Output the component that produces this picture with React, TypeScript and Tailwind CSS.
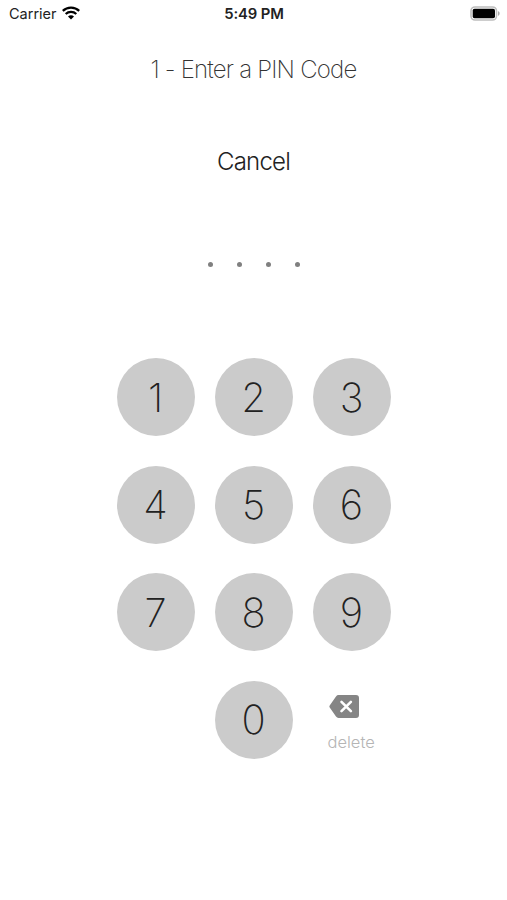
const keys = [1, 2, 3, 4, 5, 6, 7, 8, 9];

function PinKey({ value }: { value: number }) {
  return (
    <button className="flex h-[78px] w-[78px] items-center justify-center rounded-full bg-[#cbcbcb] pt-px text-[40px] leading-none font-extralight text-[#222]">
      {value}
    </button>
  );
}

function StatusBar() {
  return (
    <header className="grid h-7 grid-cols-3 items-center pr-[7px] pl-[9px] text-[14.5px] text-[#222]">
      <div className="flex items-center gap-[5px]">
        <span>Carrier</span>
        <svg className="-mt-0.5" width="18" height="14" viewBox="0 0 18 14" fill="none" stroke="#000" strokeWidth="2.2">
          <path d="M.8 4.9C5.3.5 12.7.5 17.2 4.9" />
          <path d="M3.7 8c2.9-2.8 7.7-2.8 10.6 0" />
          <path d="M6 10.4 9 13.5l3-3.1c-1.7-1.5-4.3-1.5-6 0Z" fill="#000" stroke="none" />
        </svg>
      </div>
      <span className="pr-px text-center text-[14.8px] font-semibold tracking-[-0.1px]">5:49 PM</span>
      <svg className="-mt-0.5 ml-auto" width="30" height="15" viewBox="0 0 30 15">
        <rect x="1" y="1" width="25.5" height="13" rx="4" fill="#fff" stroke="#bdbdbd" strokeWidth="1.6" />
        <rect x="2.7" y="2.7" width="22.3" height="9.6" rx="1.8" fill="#000" />
        <path d="M28 5.3c2.2.5 2.2 3.9 0 4.4Z" fill="#aaa" />
      </svg>
    </header>
  );
}

export default function App() {
  return (
    <main className="flex h-[900px] w-[507px] flex-col items-center bg-white font-['Inter',sans-serif]">
      <div className="w-full">
        <StatusBar />
      </div>
      <h1 className="mt-[26px] text-2xl font-extralight tracking-[-0.8px] text-[#333]">1 - Enter a PIN Code</h1>
      <button className="mt-[60px] text-2xl font-light tracking-[-0.8px] text-[#222]">Cancel</button>
      <div className="mt-[83.5px] ml-px flex gap-[24.3px]">
        {[0, 1, 2, 3].map((i) => (
          <span key={i} className="h-[5px] w-[5px] rounded-full bg-[#808080]" />
        ))}
      </div>
      <div className="mt-[91.5px] grid grid-cols-3 gap-x-5 gap-y-[29.6px]">
        {keys.map((key) => (
          <PinKey key={key} value={key} />
        ))}
        <span />
        <PinKey value={0} />
        <button className="flex flex-col items-start pt-3.5 pl-4 text-[#b5b5b5]">
          <svg className="ml-[0.5px]" width="30" height="23" viewBox="0 0 30 23">
            <path
              d="M9.5 0H27a3 3 0 0 1 3 3v17a3 3 0 0 1-3 3H9.5Q8 23 7 21.6L.7 12.5q-.7-1 0-2L7 1.4Q8 0 9.5 0Z"
              fill="#858585"
            />
            <path d="m12.5 6.8 9.4 9.4m0-9.4-9.4 9.4" stroke="#fff" strokeWidth="2.6" strokeLinecap="round" />
          </svg>
          <span className="-ml-px mt-3 text-[16.5px] leading-6 font-light">delete</span>
        </button>
      </div>
    </main>
  );
}
